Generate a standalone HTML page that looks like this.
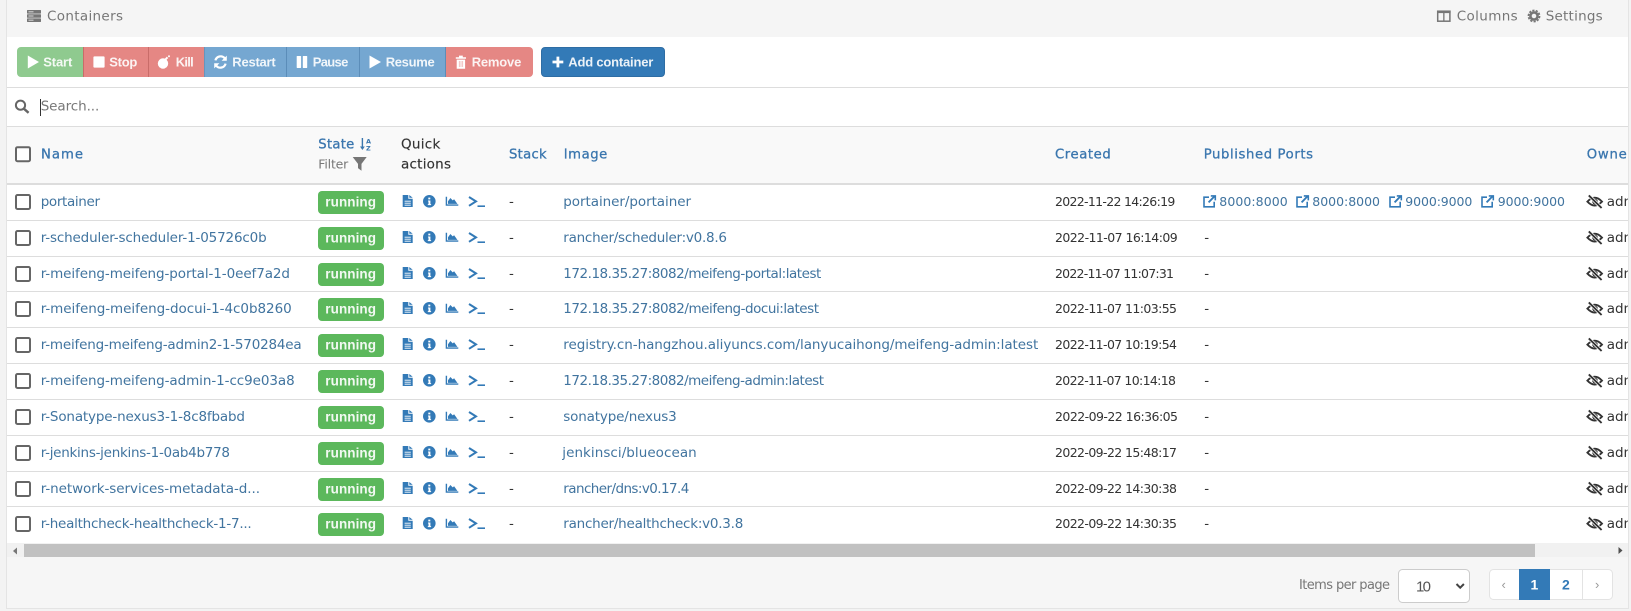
<!DOCTYPE html>
<html lang="en">
<head>
<meta charset="utf-8">
<title>Containers</title>
<style>
html,body{margin:0;padding:0;width:1631px;height:611px;overflow:hidden;background:#f3f3f3}
svg{display:block}
text{font-family:"DejaVu Sans","Liberation Sans",sans-serif;font-size:13.5px;white-space:pre}
.l{fill:#41749f}
.n{fill:#41749f;font-size:12.5px}
.d{fill:#333}
.t{fill:#333;font-size:12.5px}
.h{fill:#3a76ae;stroke:#3a76ae;stroke-width:.3px;font-size:13.2px}
.q{fill:#333;stroke:#333;stroke-width:.15px}
.g{fill:#767676}
.b{font-family:"Liberation Sans",sans-serif;font-weight:700;font-size:13.5px;fill:#fff;opacity:.92}
.w{font-family:"Liberation Sans",sans-serif;font-weight:700;font-size:13px;fill:#fff;opacity:.9}
</style>
</head>
<body>
<svg xmlns="http://www.w3.org/2000/svg" width="1631" height="611" viewBox="0 0 1631 611">
<defs>
<clipPath id="grp"><rect x="17" y="47" width="516" height="30" rx="4"/></clipPath>
<g id="r">
  <rect x="16" y="195" width="14" height="14" rx="1.5" fill="#fff" stroke="#666" stroke-width="2"/>
  <rect x="318" y="191" width="66" height="23" rx="4" fill="#5cb85c"/>
  <path d="M402.7 195h5.6v3.7h4.4v8.3H402.7zM409.3 195l3.4 2.8h-3.4z" fill="#337ab7"/>
  <path d="M404.6 201.2h6.2M404.6 203.2h6.2M404.6 205.2h6.2" stroke="#fff" stroke-width=".9"/>
  <circle cx="429.3" cy="201.3" r="6.3" fill="#337ab7"/>
  <path d="M428.3 197.6h2v1.8h-2zM428 200.5h2.4v3.6h.7v1h-3.3v-1h.7v-2.6h-.5z" fill="#fff"/>
  <path d="M446.4 196.7v8.4h11.9" fill="none" stroke="#337ab7" stroke-width="1.4"/>
  <path d="M448 203.9v-2.6l2.4-3.3 2.3 2.4 1.4-1.2 3.3 4.7z" fill="#337ab7"/>
  <path d="M469 197l7 4.4-7 4.4" fill="none" stroke="#337ab7" stroke-width="2"/>
  <rect x="477.5" y="205.4" width="7.5" height="1.6" fill="#337ab7"/>
  <path d="M1587.4 201.6Q1594.7 193.8 1602 201.6Q1594.7 209.4 1587.4 201.6z" fill="none" stroke="#333" stroke-width="1.9"/>
  <circle cx="1595" cy="201.6" r="2.8" fill="#333"/>
  <path d="M1588.8 195.4L1601.6 208" stroke="#fff" stroke-width="3.4"/>
  <path d="M1588.8 195.4L1601.6 208" stroke="#333" stroke-width="1.9"/>
</g>
<g id="x" fill="none" stroke="#337ab7">
  <path d="M1209 197.2h-5v9.6h10.2v-5" stroke-width="1.6"/>
  <path d="M1208.6 202.4l5.8-6" stroke-width="1.9"/>
  <path d="M1210.8 195.9h4.5v4.5" stroke-width="1.6"/>
</g>
</defs>

<!-- page & card -->
<rect x="0" y="0" width="1631" height="611" fill="#f3f3f3"/>
<rect x="6" y="0" width="1623" height="609" fill="#e4e4e4"/>
<rect x="7" y="0" width="1621" height="608" fill="#fff"/>
<rect x="7" y="0" width="1621" height="37" fill="#f5f5f5"/>

<!-- title bar -->
<g fill="#767676">
  <rect x="27" y="10" width="14" height="3.6" rx=".6"/>
  <rect x="27" y="14.2" width="14" height="3.6" rx=".6"/>
  <rect x="27" y="18.4" width="14" height="3.6" rx=".6"/>
</g>
<g fill="#d8d8d8">
  <rect x="28.5" y="11.3" width="5" height="1"/>
  <rect x="28.5" y="15.5" width="5" height="1"/>
  <rect x="28.5" y="19.7" width="5" height="1"/>
</g>
<text class="g" x="47" y="20.5" textLength="76">Containers</text>
<rect x="1437.7" y="11.2" width="12.2" height="10" fill="none" stroke="#767676" stroke-width="1.5"/>
<rect x="1437" y="10.5" width="13.6" height="2.6" fill="#767676"/>
<rect x="1443.2" y="11" width="1.3" height="10" fill="#767676"/>
<text class="g" x="1456.7" y="20.5" textLength="61">Columns</text>
<circle cx="1534" cy="16" r="3.6" fill="none" stroke="#767676" stroke-width="2.6"/>
<circle cx="1534" cy="16" r="5.6" fill="none" stroke="#767676" stroke-width="1.6" stroke-dasharray="2.2 1.3"/>
<text class="g" x="1545.7" y="20.5" textLength="57">Settings</text>

<!-- action buttons -->
<g clip-path="url(#grp)">
  <rect x="17" y="47" width="66" height="30" fill="#8fca8f"/>
  <rect x="83" y="47" width="65" height="30" fill="#e58784"/>
  <rect x="148" y="47" width="56" height="30" fill="#e58784"/>
  <rect x="204" y="47" width="82" height="30" fill="#75a7d1"/>
  <rect x="286" y="47" width="73" height="30" fill="#75a7d1"/>
  <rect x="359" y="47" width="86" height="30" fill="#75a7d1"/>
  <rect x="445" y="47" width="88" height="30" fill="#e58784"/>
  <rect x="83" y="47" width="1" height="30" fill="#c96c69"/>
  <rect x="148" y="47" width="1" height="30" fill="#c96c69"/>
  <rect x="204" y="47" width="1" height="30" fill="#6795bd"/>
  <rect x="286" y="47" width="1" height="30" fill="#5b8db9"/>
  <rect x="359" y="47" width="1" height="30" fill="#5b8db9"/>
  <rect x="445" y="47" width="1" height="30" fill="#5b8db9"/>
</g>
<path d="M27.8 55.5L39 62 27.8 68.5z" fill="#fff"/>
<text class="w" x="43.3" y="66.5" textLength="29">Start</text>
<rect x="93.4" y="56.4" width="11.2" height="11.2" rx="1" fill="#fff"/>
<text class="w" x="109.3" y="66.5" textLength="28">Stop</text>
<circle cx="163" cy="63.5" r="5.2" fill="#fff"/>
<path d="M165.5 59.5l2-2.2" stroke="#fff" stroke-width="2"/>
<circle cx="169" cy="56.2" r="1" fill="#fff"/>
<text class="w" x="175.7" y="66.5" textLength="18">Kill</text>
<g fill="none" stroke="#fff" stroke-width="2.2">
  <path d="M215.4 60.4a5.4 5.4 0 0 1 9.3-2.2"/>
  <path d="M225.6 63.6a5.4 5.4 0 0 1-9.3 2.2"/>
</g>
<path d="M226.8 55.6v5.2h-5.2zM214.2 68.4v-5.2h5.2z" fill="#fff"/>
<text class="w" x="232.3" y="66.5" textLength="43.4">Restart</text>
<rect x="296.7" y="56" width="4.4" height="12" rx=".6" fill="#fff"/>
<rect x="302.8" y="56" width="4.4" height="12" rx=".6" fill="#fff"/>
<text class="w" x="312.7" y="66.5" textLength="35.6">Pause</text>
<path d="M369.5 55.5L381 62 369.5 68.5z" fill="#fff"/>
<text class="w" x="385.7" y="66.5" textLength="49">Resume</text>
<path d="M455.8 57.2h10.2v1.6h-10.2zM459 55.6h3.8v1.6h-3.8zM456.7 59.6h8.4v9.2h-8.4z" fill="#fff"/>
<path d="M459.2 61v6M461 61v6M462.8 61v6" stroke="#e58784" stroke-width=".5"/>
<text class="w" x="471.7" y="66.5" textLength="49.6">Remove</text>
<rect x="541.5" y="47.5" width="123" height="29" rx="3.5" fill="#337ab7" stroke="#2e6da4"/>
<path d="M556.5 56.6h2.8v4h4v2.8h-4v4h-2.8v-4h-4v-2.8h4z" fill="#fff"/>
<text class="w" x="568.3" y="66.5" textLength="85">Add container</text>

<!-- search -->
<rect x="7" y="87" width="1621" height="1" fill="#ddd"/>
<circle cx="20.5" cy="105.2" r="4.6" fill="none" stroke="#666" stroke-width="2"/>
<path d="M24 108.8l4.6 4" stroke="#666" stroke-width="2.4"/>
<rect x="40" y="99" width="1" height="17" fill="#333"/>
<text x="40.7" y="110.5" fill="#777" textLength="58.6">Search...</text>
<rect x="7" y="126" width="1621" height="1" fill="#ddd"/>

<!-- table header -->
<rect x="7" y="127" width="1621" height="56" fill="#f9f9f9"/>
<rect x="7" y="183" width="1621" height="2" fill="#ddd"/>
<rect x="16" y="147.2" width="14" height="14" rx="1.5" fill="#fff" stroke="#666" stroke-width="2"/>
<text class="h" x="41" y="158.5" textLength="42">Name</text>
<text class="h" x="318.3" y="148.5" textLength="36">State</text>
<path d="M362.4 138v11" stroke="#3a76ae" stroke-width="1.4"/>
<path d="M360 146.5l2.4 3.5 2.4-3.5z" fill="#3a76ae"/>
<text x="366" y="143.4" fill="#3a76ae" style="font-size:6.5px;font-weight:700" textLength="5.4">A</text>
<text x="366" y="150.4" fill="#3a76ae" style="font-size:6.5px;font-weight:700" textLength="5.4">Z</text>
<text x="318.3" y="168.5" fill="#777" style="font-size:12.5px" textLength="30">Filter</text>
<path d="M352.7 157h14l-5.2 6.9v6.8l-3.5-2.6v-4.2z" fill="#767676"/>
<text class="q" x="401" y="148.5" textLength="39.3">Quick</text>
<text class="q" x="401" y="168.5" textLength="50">actions</text>
<text class="h" x="509" y="158.5" textLength="37.7">Stack</text>
<text class="h" x="563.7" y="158.5" textLength="43.6">Image</text>
<text class="h" x="1055" y="158.5" textLength="55.7">Created</text>
<text class="h" x="1203.7" y="158.5" textLength="109.3">Published Ports</text>
<text class="h" x="1586.7" y="158.5" style="letter-spacing:.8px">Ownership</text>

<!-- row separators -->
<g fill="#ddd">
  <rect x="7" y="220" width="1621" height="1"/>
  <rect x="7" y="256" width="1621" height="1"/>
  <rect x="7" y="291" width="1621" height="1"/>
  <rect x="7" y="327" width="1621" height="1"/>
  <rect x="7" y="363" width="1621" height="1"/>
  <rect x="7" y="399" width="1621" height="1"/>
  <rect x="7" y="435" width="1621" height="1"/>
  <rect x="7" y="471" width="1621" height="1"/>
  <rect x="7" y="506" width="1621" height="1"/>
</g>

<!-- rows -->
<g>
  <use href="#r"/>
  <text class="l" x="40.7" y="206" textLength="59.3">portainer</text>
  <text class="b" x="325.3" y="206.5" textLength="50.7">running</text>
  <text class="d" x="509" y="206">-</text>
  <text class="l" x="563.3" y="206" textLength="127.7">portainer/portainer</text>
  <text class="t" x="1055" y="206" textLength="120.3">2022-11-22 14:26:19</text>
  <use href="#x"/>
  <text class="n" x="1219.3" y="206" textLength="68.4">8000:8000</text>
  <use href="#x" transform="translate(93,0)"/>
  <text class="n" x="1312.3" y="206" textLength="67.7">8000:8000</text>
  <use href="#x" transform="translate(186,0)"/>
  <text class="n" x="1405.3" y="206" textLength="67">9000:9000</text>
  <use href="#x" transform="translate(278,0)"/>
  <text class="n" x="1497.7" y="206" textLength="67.3">9000:9000</text>
  <text class="d" x="1606.7" y="206">admin</text>
</g>
<g transform="translate(0,36)">
  <use href="#r"/>
  <text class="l" x="40.7" y="206" textLength="226">r-scheduler-scheduler-1-05726c0b</text>
  <text class="b" x="325.3" y="206.5" textLength="50.7">running</text>
  <text class="d" x="509" y="206">-</text>
  <text class="l" x="563.3" y="206" textLength="163.7">rancher/scheduler:v0.8.6</text>
  <text class="t" x="1055" y="206" textLength="122.7">2022-11-07 16:14:09</text>
  <text class="d" x="1204.3" y="206">-</text>
  <text class="d" x="1606.7" y="206">admin</text>
</g>
<g transform="translate(0,72)">
  <use href="#r"/>
  <text class="l" x="40.7" y="206" textLength="249.3">r-meifeng-meifeng-portal-1-0eef7a2d</text>
  <text class="b" x="325.3" y="206.5" textLength="50.7">running</text>
  <text class="d" x="509" y="206">-</text>
  <text class="l" x="563.3" y="206" textLength="258">172.18.35.27:8082/meifeng-portal:latest</text>
  <text class="t" x="1055" y="206" textLength="119">2022-11-07 11:07:31</text>
  <text class="d" x="1204.3" y="206">-</text>
  <text class="d" x="1606.7" y="206">admin</text>
</g>
<g transform="translate(0,107)">
  <use href="#r"/>
  <text class="l" x="40.7" y="206" textLength="251">r-meifeng-meifeng-docui-1-4c0b8260</text>
  <text class="b" x="325.3" y="206.5" textLength="50.7">running</text>
  <text class="d" x="509" y="206">-</text>
  <text class="l" x="563.3" y="206" textLength="255.7">172.18.35.27:8082/meifeng-docui:latest</text>
  <text class="t" x="1055" y="206" textLength="122">2022-11-07 11:03:55</text>
  <text class="d" x="1204.3" y="206">-</text>
  <text class="d" x="1606.7" y="206">admin</text>
</g>
<g transform="translate(0,143)">
  <use href="#r"/>
  <text class="l" x="40.7" y="206" textLength="261">r-meifeng-meifeng-admin2-1-570284ea</text>
  <text class="b" x="325.3" y="206.5" textLength="50.7">running</text>
  <text class="d" x="509" y="206">-</text>
  <text class="l" x="563.3" y="206" textLength="475">registry.cn-hangzhou.aliyuncs.com/lanyucaihong/meifeng-admin:latest</text>
  <text class="t" x="1055" y="206" textLength="122">2022-11-07 10:19:54</text>
  <text class="d" x="1204.3" y="206">-</text>
  <text class="d" x="1606.7" y="206">admin</text>
</g>
<g transform="translate(0,179)">
  <use href="#r"/>
  <text class="l" x="40.7" y="206" textLength="254">r-meifeng-meifeng-admin-1-cc9e03a8</text>
  <text class="b" x="325.3" y="206.5" textLength="50.7">running</text>
  <text class="d" x="509" y="206">-</text>
  <text class="l" x="563.3" y="206" textLength="260.7">172.18.35.27:8082/meifeng-admin:latest</text>
  <text class="t" x="1055" y="206" textLength="121">2022-11-07 10:14:18</text>
  <text class="d" x="1204.3" y="206">-</text>
  <text class="d" x="1606.7" y="206">admin</text>
</g>
<g transform="translate(0,215)">
  <use href="#r"/>
  <text class="l" x="40.7" y="206" textLength="204.3">r-Sonatype-nexus3-1-8c8fbabd</text>
  <text class="b" x="325.3" y="206.5" textLength="50.7">running</text>
  <text class="d" x="509" y="206">-</text>
  <text class="l" x="563.3" y="206" textLength="113.4">sonatype/nexus3</text>
  <text class="t" x="1055" y="206" textLength="123">2022-09-22 16:36:05</text>
  <text class="d" x="1204.3" y="206">-</text>
  <text class="d" x="1606.7" y="206">admin</text>
</g>
<g transform="translate(0,251)">
  <use href="#r"/>
  <text class="l" x="40.7" y="206" textLength="189.3">r-jenkins-jenkins-1-0ab4b778</text>
  <text class="b" x="325.3" y="206.5" textLength="50.7">running</text>
  <text class="d" x="509" y="206">-</text>
  <text class="l" x="562.3" y="206" textLength="134.4">jenkinsci/blueocean</text>
  <text class="t" x="1055" y="206" textLength="122">2022-09-22 15:48:17</text>
  <text class="d" x="1204.3" y="206">-</text>
  <text class="d" x="1606.7" y="206">admin</text>
</g>
<g transform="translate(0,287)">
  <use href="#r"/>
  <text class="l" x="40.7" y="206" textLength="219.3">r-network-services-metadata-d...</text>
  <text class="b" x="325.3" y="206.5" textLength="50.7">running</text>
  <text class="d" x="509" y="206">-</text>
  <text class="l" x="563.3" y="206" textLength="126">rancher/dns:v0.17.4</text>
  <text class="t" x="1055" y="206" textLength="122">2022-09-22 14:30:38</text>
  <text class="d" x="1204.3" y="206">-</text>
  <text class="d" x="1606.7" y="206">admin</text>
</g>
<g transform="translate(0,322)">
  <use href="#r"/>
  <text class="l" x="40.7" y="206" textLength="211">r-healthcheck-healthcheck-1-7...</text>
  <text class="b" x="325.3" y="206.5" textLength="50.7">running</text>
  <text class="d" x="509" y="206">-</text>
  <text class="l" x="563.3" y="206" textLength="180">rancher/healthcheck:v0.3.8</text>
  <text class="t" x="1055" y="206" textLength="122">2022-09-22 14:30:35</text>
  <text class="d" x="1204.3" y="206">-</text>
  <text class="d" x="1606.7" y="206">admin</text>
</g>

<!-- horizontal scrollbar -->
<rect x="7" y="543" width="1621" height="14" fill="#f1f1f1"/>
<rect x="24" y="544" width="1511" height="13" fill="#c1c1c1"/>
<path d="M17 547.5v7l-4-3.5z" fill="#777"/>
<path d="M1618.5 547v7l4-3.5z" fill="#505050"/>

<!-- footer -->
<rect x="7" y="557" width="1621" height="51" fill="#f6f6f6"/>
<text x="1299" y="589" fill="#777" style="font-size:13px" textLength="91">Items per page</text>
<rect x="1398.5" y="569.5" width="71" height="33" rx="4" fill="#fff" stroke="#ccc"/>
<text x="1416" y="591.5" fill="#555" style="font-family:'Liberation Sans',sans-serif;font-size:15px" textLength="15">10</text>
<path d="M1456.5 584l3.7 3.7 3.7-3.7" fill="none" stroke="#444" stroke-width="2"/>
<rect x="1489.5" y="569.5" width="123" height="30" rx="4" fill="#fff" stroke="#e3e3e3"/>
<rect x="1519" y="569" width="31" height="31" fill="#337ab7"/>
<rect x="1582" y="570" width="1" height="29" fill="#e3e3e3"/>
<text x="1501.5" y="589" fill="#999" style="font-family:'Liberation Sans',sans-serif;font-size:13px">‹</text>
<text x="1530.5" y="589.5" fill="#fff" style="font-family:'Liberation Sans',sans-serif;font-size:14px;font-weight:700">1</text>
<text x="1562" y="589.5" fill="#337ab7" style="font-family:'Liberation Sans',sans-serif;font-size:14px;font-weight:700">2</text>
<text x="1595" y="589" fill="#999" style="font-family:'Liberation Sans',sans-serif;font-size:13px">›</text>

<!-- right page strip (clips the overflowing Ownership column) -->
<rect x="1628" y="37" width="3" height="574" fill="#f3f3f3"/>
<rect x="1628" y="0" width="1" height="609" fill="#e4e4e4"/>
</svg>
</body>
</html>
